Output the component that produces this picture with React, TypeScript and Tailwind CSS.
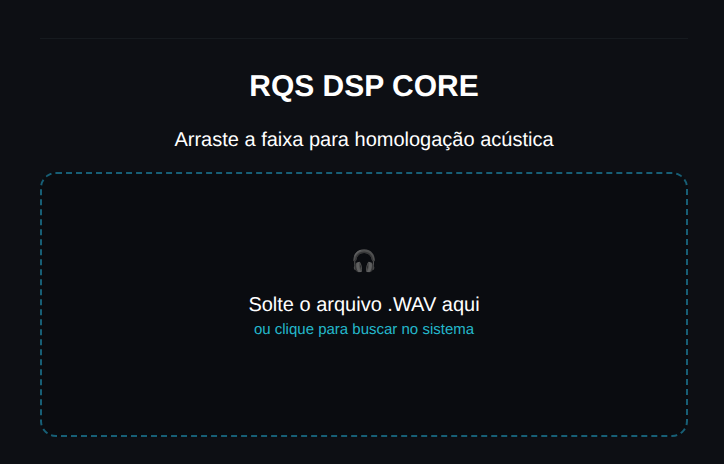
export default function App() {
  return (
    <div className="h-[464px] overflow-hidden bg-[#0d0f14] pl-10 pt-[38px] text-center text-white [text-rendering:geometricPrecision]" style={{ fontFamily: '"Liberation Sans", sans-serif' }}>
      <div className="w-[648px]">
        <div className="h-px bg-[#161a1f]" />
        <h1 className="mt-[30px] text-[30px] leading-[36px] font-bold">RQS DSP CORE</h1>
        <p className="mt-[24px] text-[20px] leading-[23px]">Arraste a faixa para homologação acústica</p>
        <div className="mt-[20px] flex h-[265px] flex-col items-center justify-center rounded-2xl border-2 border-dashed border-[#175f76] bg-[#0a0c10] pb-[25px]">
          <div className="text-[21px] leading-[30px] opacity-80">🎧</div>
          <p className="mt-[17px] text-[20px] leading-[23px]">Solte o arquivo .WAV aqui</p>
          <p className="mt-[4px] text-[15px] leading-[17px] text-[#24b8cc]">ou clique para buscar no sistema</p>
        </div>
      </div>
    </div>
  );
}
